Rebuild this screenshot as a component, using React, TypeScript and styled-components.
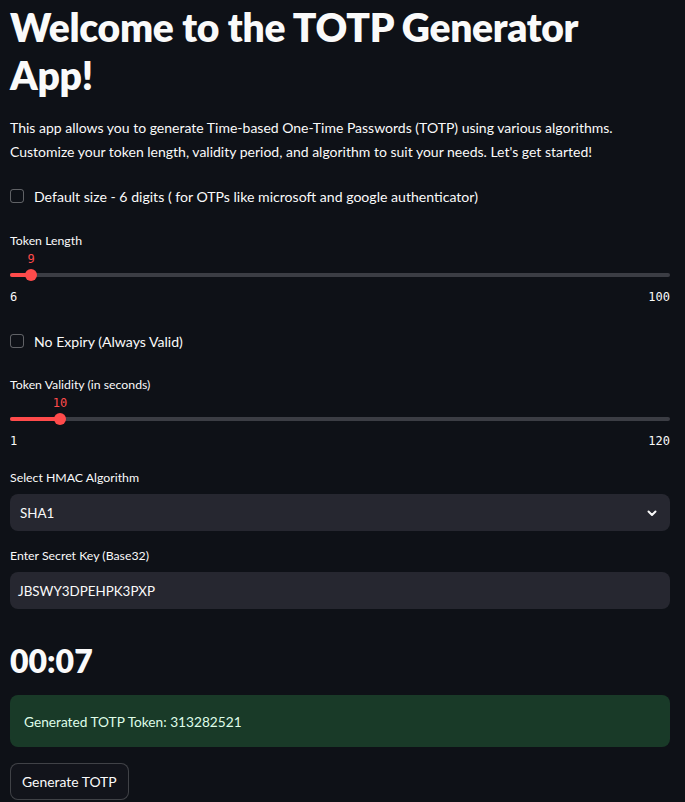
import React from "react";
import styled, { createGlobalStyle } from "styled-components";

const GlobalStyle = createGlobalStyle`
  html, body {
    margin: 0;
    padding: 0;
    background: #0e1117;
  }
  body {
    font-family: "Lato", "Noto Sans", sans-serif;
    color: #fafafa;
  }
`;

const Page = styled.div`
  display: flex;
  flex-direction: column;
  padding: 0 15px 0 10px;
  min-height: 802px;
  box-sizing: border-box;
`;

const Title = styled.h1`
  margin: 3px 0 0 0;
  max-width: 600px;
  font-size: 39px;
  line-height: 48px;
  font-weight: 800;
  letter-spacing: -0.3px;
`;

const Intro = styled.p`
  margin: 17px 0 0 0;
  max-width: 640px;
  font-size: 14px;
  line-height: 24px;
`;

const CheckRow = styled.label<{ $mt: number }>`
  display: flex;
  align-items: center;
  gap: 10px;
  height: 24px;
  margin-top: ${({ $mt }) => $mt}px;
  font-size: 14.1px;
`;

const Box = styled.span`
  width: 14px;
  height: 14px;
  box-sizing: border-box;
  border: 1px solid rgba(250, 250, 250, 0.35);
  border-radius: 3px;
`;

const Label = styled.div<{ $mt: number }>`
  margin-top: ${({ $mt }) => $mt}px;
  height: 20px;
  line-height: 20px;
  font-size: 12.3px;
`;

const SliderWrap = styled.div`
  display: flex;
  flex-direction: column;
`;

const ValueRow = styled.div`
  position: relative;
  height: 16px;
`;

const Value = styled.span`
  position: absolute;
  top: 0;
  transform: translateX(-50%);
  font-family: "DejaVu Sans Mono", monospace;
  font-size: 12px;
  line-height: 16px;
  color: #ff4b4b;
`;

const TrackArea = styled.div`
  position: relative;
  height: 16px;
  display: flex;
  align-items: center;
`;

const Track = styled.div`
  width: 100%;
  height: 4px;
  border-radius: 2px;
  background: #3b3d44;
  overflow: hidden;
`;

const Fill = styled.div`
  height: 100%;
  background: #ff4b4b;
`;

const Thumb = styled.span`
  position: absolute;
  top: 2px;
  width: 12px;
  height: 12px;
  border-radius: 50%;
  background: #ff4b4b;
  transform: translateX(-50%);
`;

const Ticks = styled.div`
  margin-top: 6px;
  display: flex;
  justify-content: space-between;
  font-family: "DejaVu Sans Mono", monospace;
  font-size: 12px;
  line-height: 16px;
`;

const Field = styled.div<{ $pl?: number }>`
  margin-top: 6px;
  height: 37px;
  display: flex;
  align-items: center;
  justify-content: space-between;
  padding: 0 12px 0 ${({ $pl }) => $pl ?? 10}px;
  background: #262730;
  border-radius: 8px;
  font-size: 13.4px;
`;

const Timer = styled.h2`
  margin: 32px 0 0 0;
  font-size: 32px;
  line-height: 40px;
  font-weight: 800;
`;

const Success = styled.div`
  margin-top: 14px;
  height: 52px;
  display: flex;
  align-items: center;
  padding: 0 14px;
  background: #193a28;
  color: #dffde9;
  border-radius: 8px;
  font-size: 13.7px;
`;

const Button = styled.button`
  margin-top: 16px;
  align-self: flex-start;
  height: 37px;
  padding: 0 11px;
  background: #12141b;
  color: #fafafa;
  border: 1px solid rgba(250, 250, 250, 0.2);
  border-radius: 8px;
  font-family: inherit;
  font-size: 13.9px;
`;

function Chevron() {
  return (
    <svg width="12" height="12" viewBox="0 0 12 12" fill="none">
      <path d="M2.5 4.5 L6 8 L9.5 4.5" stroke="#fafafa" strokeWidth="2" strokeLinecap="round" strokeLinejoin="round" />
    </svg>
  );
}

function Slider({ min, max, value }: { min: number; max: number; value: number }) {
  const pct = ((value - min) / (max - min)) * 100;
  return (
    <SliderWrap>
      <ValueRow>
        <Value style={{ left: `${pct}%` }}>{value}</Value>
      </ValueRow>
      <TrackArea>
        <Track>
          <Fill style={{ width: `${pct}%` }} />
        </Track>
        <Thumb style={{ left: `${pct}%` }} />
      </TrackArea>
      <Ticks>
        <span>{min}</span>
        <span>{max}</span>
      </Ticks>
    </SliderWrap>
  );
}

export default function App() {
  return (
    <>
      <GlobalStyle />
      <Page>
        <Title>Welcome to the TOTP Generator App!</Title>
        <Intro>
          This app allows you to generate Time-based One-Time Passwords (TOTP) using various algorithms.
          Customize your token length, validity period, and algorithm to suit your needs. Let's get started!
        </Intro>

        <CheckRow $mt={20}>
          <Box />
          Default size - 6 digits ( for OTPs like microsoft and google authenticator)
        </CheckRow>
        <Label $mt={23}>Token Length</Label>
        <Slider min={6} max={100} value={9} />

        <CheckRow $mt={24}>
          <Box />
          No Expiry (Always Valid)
        </CheckRow>
        <Label $mt={22}>Token Validity (in seconds)</Label>
        <Slider min={1} max={120} value={10} />

        <Label $mt={19}>Select HMAC Algorithm</Label>
        <Field>
          SHA1
          <Chevron />
        </Field>
        <Label $mt={15}>Enter Secret Key (Base32)</Label>
        <Field $pl={8}>JBSWY3DPEHPK3PXP</Field>

        <Timer>00:07</Timer>
        <Success>Generated TOTP Token: 313282521</Success>
        <Button>Generate TOTP</Button>
      </Page>
    </>
  );
}
